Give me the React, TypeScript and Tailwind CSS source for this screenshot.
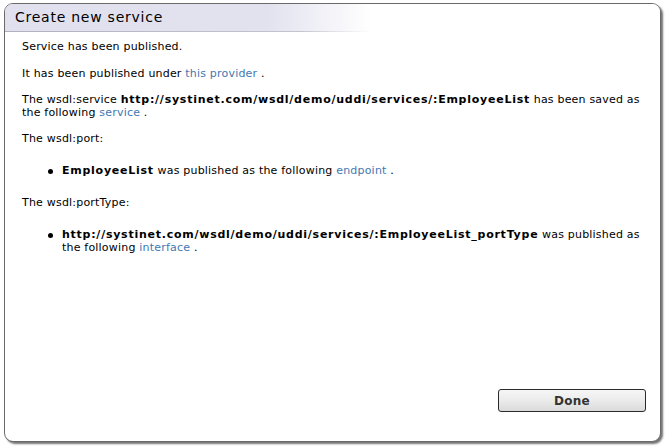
import React from "react";

const link = "text-[#3f78b3]";
const b = "font-bold tracking-[0.75px]";

function Bullet({ children }: { children: React.ReactNode }) {
  return (
    <div className="flex my-[19px] pl-[26px]">
      <span className="w-[14px] shrink-0 flex pt-[5px]">
        <span className="w-[5px] h-[5px] rounded-full bg-black" />
      </span>
      <div>{children}</div>
    </div>
  );
}

export default function App() {
  return (
    <div className="w-[666px] h-[446px] bg-white overflow-hidden" style={{ fontFamily: "'DejaVu Sans', Verdana, sans-serif" }}>
      <div className="ml-[4px] mt-[3px] w-[657px] h-[439px] border border-[#6a6a6a] rounded-[9px] bg-white shadow-[2px_2px_2px_rgba(0,0,0,0.55)] flex flex-col overflow-hidden">
        <div className="h-[28px] flex items-center pl-[10px] bg-[linear-gradient(90deg,#e0e0ee_0%,#e2e2ef_40%,#ffffff_56%)] border-b border-transparent [border-image:linear-gradient(90deg,#b0b0c0_0%,#c4c4d0_45%,#ffffff_56%)_1]">
          <span className="text-[14px] text-black tracking-[0.75px]">Create new service</span>
        </div>
        <div className="flex-1 pl-[17px] pr-[14px] pt-[8px] text-[11px] leading-[13px] text-black tracking-[0.2px]">
          <p className="mb-[14px]">Service has been published.</p>
          <p className="mb-[13px]">It has been published under <span className={link}>this provider</span> .</p>
          <p className="mb-[13px]">
            The wsdl:service <span className={b}>http://systinet.com/wsdl/demo/uddi/services/:EmployeeList</span> has been saved as the following <span className={link}>service</span> .
          </p>
          <p>The wsdl:port:</p>
          <Bullet>
            <span className={b}>EmployeeList</span> was published as the following <span className={link}>endpoint</span> .
          </Bullet>
          <p>The wsdl:portType:</p>
          <Bullet>
            <span className={b}>http://systinet.com/wsdl/demo/uddi/services/:EmployeeList_portType</span> was published as the following <span className={link}>interface</span> .
          </Bullet>
        </div>
        <div className="flex justify-end pr-[14px] pb-[29px]">
          <button className="w-[148px] h-[23px] rounded-[3px] border border-[#2a2a2a] bg-[linear-gradient(180deg,#f6f6f6_0%,#ebebeb_50%,#dadada_100%)] text-[12px] font-bold text-[#333] tracking-[0.3px]">
            Done
          </button>
        </div>
      </div>
    </div>
  );
}
